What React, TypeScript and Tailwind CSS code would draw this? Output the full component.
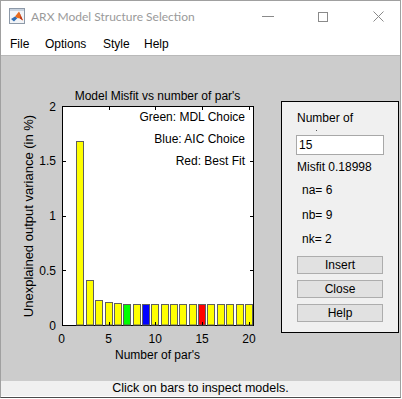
import React from "react";

const font = { fontFamily: '"Liberation Sans", Arial, sans-serif' };

const bars: { n: number; v: number; color: string }[] = [
  { n: 2, v: 1.683, color: "#ffff00" },
  { n: 3, v: 0.411, color: "#ffff00" },
  { n: 4, v: 0.231, color: "#ffff00" },
  { n: 5, v: 0.213, color: "#ffff00" },
  { n: 6, v: 0.198, color: "#ffff00" },
  { n: 7, v: 0.19, color: "#00ff00" },
  { n: 8, v: 0.19, color: "#ffff00" },
  { n: 9, v: 0.19, color: "#0000ff" },
  { n: 10, v: 0.19, color: "#ffff00" },
  { n: 11, v: 0.19, color: "#ffff00" },
  { n: 12, v: 0.19, color: "#ffff00" },
  { n: 13, v: 0.19, color: "#ffff00" },
  { n: 14, v: 0.19, color: "#ffff00" },
  { n: 15, v: 0.19, color: "#ff0000" },
  { n: 16, v: 0.19, color: "#ffff00" },
  { n: 17, v: 0.19, color: "#ffff00" },
  { n: 18, v: 0.19, color: "#ffff00" },
  { n: 19, v: 0.19, color: "#ffff00" },
  { n: 20, v: 0.19, color: "#ffff00" },
];

// page pixel coordinates
const X = (v: number) => 61.7 + v * 9.36;
const Y = (v: number) => 326 - v * 109.5;

const MatlabIcon = () => (
  <svg width="16" height="16" viewBox="0 0 16 16">
    <rect x="0.5" y="0.5" width="15" height="15" fill="#f2f4f7" stroke="#8d99a8" />
    <rect x="1" y="1" width="14" height="2" fill="#c9d3df" />
    <path d="M2 11 L6 8.5 L8.5 10 L5 13.5 Z" fill="#2f6db3" />
    <path d="M6 8.5 L10 3.5 L14 12.5 L11 10.5 L8.5 10 Z" fill="#e86a1c" />
    <path d="M10 3.5 L11.5 8 L11 10.5 L14 12.5 Z" fill="#b8321a" />
  </svg>
);

const Chart = () => {
  const xt = [0, 5, 10, 15, 20];
  const yt = [
    { v: 0, l: "0" },
    { v: 0.5, l: "0.5" },
    { v: 1, l: "1" },
    { v: 1.5, l: "1.5" },
    { v: 2, l: "2" },
  ];
  return (
    <svg width="280" height="325" viewBox="1 57 280 325" className="block shrink-0" style={font}>
      <rect x="62.5" y="107.5" width="191" height="219" fill="#ffffff" stroke="#000000" />
      {bars.map((b) => {
        const left = Math.round(X(b.n) - 4) + 0.5;
        const top = Math.round(Y(b.v)) + 0.5;
        return (
          <rect
            key={b.n}
            x={left}
            y={top}
            width={7}
            height={326 - top}
            fill={b.color}
            stroke="#5f5f5f"
          />
        );
      })}
      {xt.map((t) => {
        const px = Math.round(X(t)) + 0.5;
        return (
          <g key={t}>
            {t > 0 && t < 20.5 && (
              <>
                <line x1={px} x2={px} y1={326} y2={323} stroke="#000" />
                <line x1={px} x2={px} y1={108} y2={111} stroke="#000" />
              </>
            )}
            <text x={X(t)} y={340} fontSize="12" textAnchor="middle" dominantBaseline="central">
              {t}
            </text>
          </g>
        );
      })}
      {yt.map((t) => {
        const py = Math.round(Y(t.v)) + 0.5;
        return (
          <g key={t.l}>
            {t.v > 0 && t.v < 2 && (
              <>
                <line x1={63} x2={66} y1={py} y2={py} stroke="#000" />
                <line x1={253} x2={250} y1={py} y2={py} stroke="#000" />
              </>
            )}
            <text x={56} y={Y(t.v) + 0.5} fontSize="12" textAnchor="end" dominantBaseline="central">
              {t.l}
            </text>
          </g>
        );
      })}
      <text x={157.5} y={97} fontSize="12" textAnchor="middle" dominantBaseline="central">
        Model Misfit vs number of par's
      </text>
      <text x={245} y={118} fontSize="12" textAnchor="end" dominantBaseline="central">
        Green: MDL Choice
      </text>
      <text x={245} y={140} fontSize="12" textAnchor="end" dominantBaseline="central">
        Blue: AIC Choice
      </text>
      <text x={245} y={162} fontSize="12" textAnchor="end" dominantBaseline="central">
        Red: Best Fit
      </text>
      <text x={157.5} y={356} fontSize="12" textAnchor="middle" dominantBaseline="central">
        Number of par's
      </text>
      <text
        transform="translate(33 217) rotate(-90)"
        fontSize="13"
        textAnchor="middle"
      >
        Unexplained output variance (in %)
      </text>
    </svg>
  );
};

const Button = ({ label, className }: { label: string; className: string }) => (
  <div
    className={`ml-[15px] flex h-[18px] w-[86px] items-center justify-center border border-[#adadad] bg-[#e1e1e1] text-[12px] leading-none text-black ${className}`}
  >
    {label}
  </div>
);

const SidePanel = () => (
  <div
    className="mt-[45px] flex h-[232px] w-[118px] shrink-0 flex-col border border-black bg-[#f0f0f0] text-[12px] text-black"
    style={font}
  >
    <div className="mt-[8px] h-[16px] pl-[15px] leading-[16px]">Number of</div>
    <div className="ml-[34px] mt-[4px] h-[1px] w-[1px] bg-[#555]" />
    <div className="ml-[14px] mt-[4px] flex h-[20px] w-[88px] items-center border border-[#a8a8a8] bg-white pl-[2px]">
      15
    </div>
    <div className="mt-[4px] h-[16px] pl-[15px] leading-[16px]">Misfit 0.18998</div>
    <div className="mt-[7px] h-[16px] pl-[20px] leading-[16px]">na= 6</div>
    <div className="mt-[9px] h-[16px] pl-[20px] leading-[16px]">nb= 9</div>
    <div className="mt-[8px] h-[16px] pl-[20px] leading-[16px]">nk= 2</div>
    <Button label="Insert" className="mt-[9px]" />
    <Button label="Close" className="mt-[6px]" />
    <Button label="Help" className="mt-[6px]" />
  </div>
);

export default function App() {
  return (
    <div className="h-[399px] w-[402px] bg-white">
      <div className="flex h-[398px] w-[401px] flex-col border border-[#a0a0a0] border-b-[#4a4a4a]">
        <div className="flex h-[31px] shrink-0 items-center bg-white">
          <div className="ml-[8px] mt-[-1px]">
            <MatlabIcon />
          </div>
          <div
            className="ml-[6px] text-[12px] text-[#9a9a9a]"
            style={{ fontFamily: 'Lato, "Liberation Sans", sans-serif' }}
          >
            ARX Model Structure Selection
          </div>
          <div className="flex-1" />
          <div className="mr-[44px] h-[1px] w-[12px] bg-[#8a8a8a]" />
          <div className="mr-[45px] h-[10px] w-[10px] border border-[#8a8a8a]" />
          <svg width="11" height="11" viewBox="0 0 11 11" className="mr-[16px]">
            <path d="M0.5 0.5 L10.5 10.5 M10.5 0.5 L0.5 10.5" stroke="#8a8a8a" strokeWidth="1" />
          </svg>
        </div>
        <div
          className="flex h-[24px] shrink-0 items-center border-b border-[#b9b9b9] bg-white pl-[9px] text-[12px] text-black"
          style={font}
        >
          <span className="w-[35px]">File</span>
          <span className="w-[58px]">Options</span>
          <span className="w-[41px]">Style</span>
          <span>Help</span>
        </div>
        <div className="flex h-[325px] shrink-0 bg-[#cccccc]">
          <Chart />
          <SidePanel />
        </div>
        <div
          className="flex h-[15px] shrink-0 items-center justify-center bg-[#f0f0f0] text-[12.5px] leading-none text-black"
          style={font}
        >
          Click on bars to inspect models.
        </div>
      </div>
    </div>
  );
}
